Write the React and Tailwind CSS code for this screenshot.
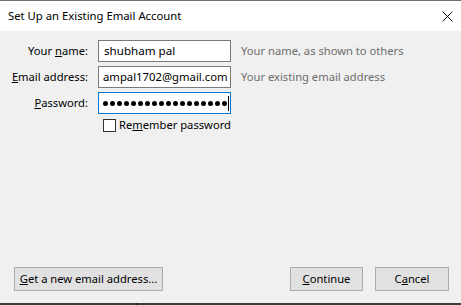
import React from "react";

function Dots() {
  return (
    <div className="flex items-center gap-[2px]">
      {Array.from({ length: 18 }).map((_, i) => (
        <span key={i} className="block w-[5px] h-[5px] rounded-full bg-black" />
      ))}
    </div>
  );
}

export default function App() {
  const font = "font-['Segoe_UI','Noto_Sans',sans-serif]";
  return (
    <div className={`w-[461px] h-[305px] flex flex-col overflow-hidden text-[11.2px] text-black ${font}`}>
      <div className="h-[1px] bg-[#707070]" />
      <div className="h-[30px] bg-white flex items-center justify-between pl-[8px] pr-[8px]">
        <span className="text-[11.3px] leading-none">Set Up an Existing Email Account</span>
        <svg width="11" height="11" viewBox="0 0 11 11">
          <path d="M0.5 0.5 L10.5 10.5 M10.5 0.5 L0.5 10.5" stroke="#111" strokeWidth="1" />
        </svg>
      </div>
      <div className="flex-1 bg-[#f0f0f0] flex flex-col pt-[9px] pb-[12px]">
        <div className="flex flex-col gap-[4px]">
          <div className="flex items-center h-[22px]">
            <div className="w-[88px] text-right whitespace-nowrap">Your <u>n</u>ame:</div>
            <div className="ml-[10px] w-[133px] h-[22px] border border-[#7a7a7a] bg-white flex items-center px-[5px] text-[11.6px] whitespace-nowrap overflow-hidden">shubham pal</div>
            <div className="ml-[10px] text-[#6d6d6d] whitespace-nowrap">Your name, as shown to others</div>
          </div>
          <div className="flex items-center h-[22px]">
            <div className="w-[88px] text-right whitespace-nowrap"><u>E</u>mail address:</div>
            <div className="ml-[10px] w-[133px] h-[22px] border border-[#7a7a7a] bg-white flex items-center pl-[4px] text-[11.3px] whitespace-nowrap overflow-hidden">ampal1702@gmail.com</div>
            <div className="ml-[10px] text-[#6d6d6d] whitespace-nowrap">Your existing email address</div>
          </div>
          <div className="flex items-center h-[22px]">
            <div className="w-[88px] text-right whitespace-nowrap"><u>P</u>assword:</div>
            <div className="ml-[10px] w-[133px] h-[22px] border border-[#0078d7] bg-white flex items-center pl-[4px] overflow-hidden">
              <Dots />
              <span className="ml-[1px] w-[1px] h-[15px] bg-black" />
            </div>
          </div>
        </div>
        <div className="flex items-center mt-[3px] ml-[103px]">
          <span className="w-[13px] h-[13px] border border-[#333] bg-white" />
          <span className="ml-[3px] whitespace-nowrap">Re<u>m</u>ember password</span>
        </div>
        <div className="flex-1" />
        <div className="flex items-center px-[14px]">
          <button className="w-[149px] h-[24px] bg-[#e1e1e1] border border-[#adadad] flex items-center justify-center whitespace-nowrap">
            <span><u>G</u>et a new email address...</span>
          </button>
          <div className="flex-1" />
          <button className="w-[73px] h-[24px] bg-[#e1e1e1] border border-[#adadad] flex items-center justify-center whitespace-nowrap">
            <span><u>C</u>ontinue</span>
          </button>
          <button className="ml-[12px] w-[74px] h-[24px] bg-[#e1e1e1] border border-[#adadad] flex items-center justify-center mr-[-2px] whitespace-nowrap">
            <span>C<u>a</u>ncel</span>
          </button>
        </div>
      </div>
      <div className="h-[2px] bg-[#3c3c3c] flex">
        <div className="w-[136px]" />
        <div className="w-[1px] bg-[#1a1a1a]" />
      </div>
    </div>
  );
}
